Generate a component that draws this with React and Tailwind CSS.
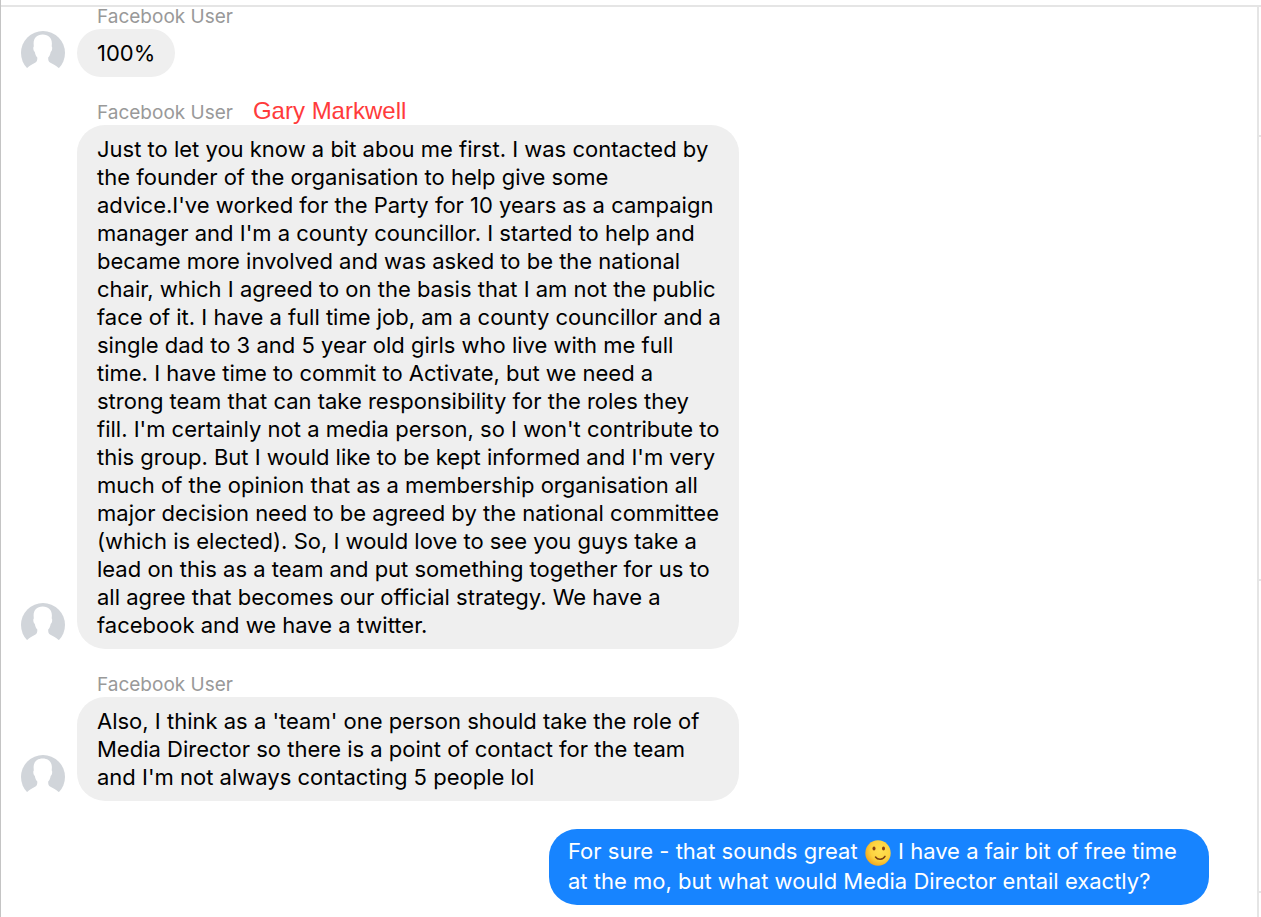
import React from 'react'

const messages = [
    { id: 1, sender: 'Facebook User', lines: ['100%'] },
    {
        id: 2,
        sender: 'Facebook User',
        note: 'Gary Markwell',
        lines: [
            'Just to let you know a bit abou me first. I was contacted by',
            'the founder of the organisation to help give some',
            "advice.I've worked for the Party for 10 years as a campaign",
            "manager and I'm a county councillor. I started to help and",
            'became more involved and was asked to be the national',
            'chair, which I agreed to on the basis that I am not the public',
            'face of it. I have a full time job, am a county councillor and a',
            'single dad to 3 and 5 year old girls who live with me full',
            'time. I have time to commit to Activate, but we need a',
            'strong team that can take responsibility for the roles they',
            "fill. I'm certainly not a media person, so I won't contribute to",
            "this group. But I would like to be kept informed and I'm very",
            'much of the opinion that as a membership organisation all',
            'major decision need to be agreed by the national committee',
            '(which is elected). So, I would love to see you guys take a',
            'lead on this as a team and put something together for us to',
            'all agree that becomes our official strategy. We have a',
            'facebook and we have a twitter.',
        ],
    },
    {
        id: 3,
        sender: 'Facebook User',
        lines: [
            "Also, I think as a 'team' one person should take the role of",
            'Media Director so there is a point of contact for the team',
            "and I'm not always contacting 5 people lol",
        ],
    },
]

function Avatar() {
    return (
        <svg viewBox="0 0 44 44" className="mb-0.5 size-11 shrink-0" role="img" aria-label="Facebook User">
            <circle cx="22" cy="22" r="22" fill="#d1d5da" />
            <path
                d="M21.700 3.500C15.800 3.500 12.600 7 12.600 12.500L12.800 15.500C11.800 16 12.400 20.400 13.800 21C14.300 23.500 15 25.200 16.300 26.600C16.400 29 16.100 30.500 14.500 31.500C11.500 33.400 8.500 34.500 5.800 37.300L4 46H40L38 37.300C35.300 34.500 32 33.400 29 31.500C27.400 30.500 27.100 29 27.200 26.600C28.500 25.200 29.200 23.500 29.700 21C31.100 20.400 31.700 16 30.700 15.500L30.900 12.500C30.900 7 27.600 3.500 21.700 3.500Z"
                fill="#fff"
            />
        </svg>
    )
}

function Smiley() {
    return (
        <svg viewBox="0 0 26 26" className="mx-px inline-block size-[26px] align-[-7px]" role="img" aria-label="Slightly smiling face">
            <defs>
                <radialGradient id="face" cx="0.6" cy="0.4" r="0.65">
                    <stop offset="0" stopColor="#ffe052" />
                    <stop offset="0.6" stopColor="#fdd23f" />
                    <stop offset="1" stopColor="#f2a51c" />
                </radialGradient>
            </defs>
            <circle cx="13" cy="13" r="12.700" fill="url(#face)" />
            <ellipse cx="9" cy="8.500" rx="1.500" ry="2.100" fill="#8a3f12" />
            <ellipse cx="18.500" cy="8.500" rx="1.500" ry="2.100" fill="#8a3f12" />
            <path d="M10.500 17c2.300 3.200 7.500 3 9.500-.6" fill="none" stroke="#7a3d10" strokeWidth="1.500" strokeLinecap="round" />
        </svg>
    )
}

function Message({ message }) {
    return (
        <article className="mb-[26px]">
            <header className="flex h-[22px] items-center gap-5 pb-0.5 pl-[76px]">
                <span className="text-[19px] leading-5 text-[#999]">{message.sender}</span>
                {message.note && (
                    <span className="self-start font-['Liberation_Sans',sans-serif] text-2xl leading-4 text-[#ff3b3b]">{message.note}</span>
                )}
            </header>
            <div className="flex items-end gap-3">
                <Avatar />
                <div className={`rounded-[28px] bg-[#efefef] px-5 py-2.5 text-black ${message.lines.length > 1 ? 'w-[662px]' : ''}`}>
                    {message.lines.map((line, i) => (
                        <span key={i} className="block whitespace-nowrap">{line}</span>
                    ))}
                </div>
            </div>
        </article>
    )
}

function App() {
    return (
        <div className="flex min-h-screen flex-col border-l border-[#c4c4c4] bg-white font-[Inter,sans-serif] text-[22px] leading-7">
            <div className="h-[7px] border-b-2 border-[#e5e5e5]"></div>
            <div className="flex grow">
                <main className="grow pr-12 pl-5">
                    {messages.map((message) => (
                        <Message key={message.id} message={message} />
                    ))}
                    <div className="mt-7 flex justify-end">
                        <div className="w-[660px] rounded-[28px] bg-[#1784ff] px-[19px] pt-[7px] pb-[9px] leading-[30px] text-white">
                            <span className="block whitespace-nowrap">
                                For sure - that sounds great <Smiley /> I have a fair bit of free time
                            </span>
                            <span className="block whitespace-nowrap">at the mo, but what would Media Director entail exactly?</span>
                        </div>
                    </div>
                </main>
                {/* edge of the side panel */}
                <aside className="flex w-1 shrink-0 flex-col border-l-2 border-[#e5e5e5]">
                    <div className="h-[130px] border-b-2 border-[#e5e5e5]"></div>
                    <div className="h-[444px] border-b-2 border-[#e5e5e5]"></div>
                    <div className="h-[312px] border-b-2 border-[#e5e5e5]"></div>
                </aside>
            </div>
        </div>
    )
}

export default App
